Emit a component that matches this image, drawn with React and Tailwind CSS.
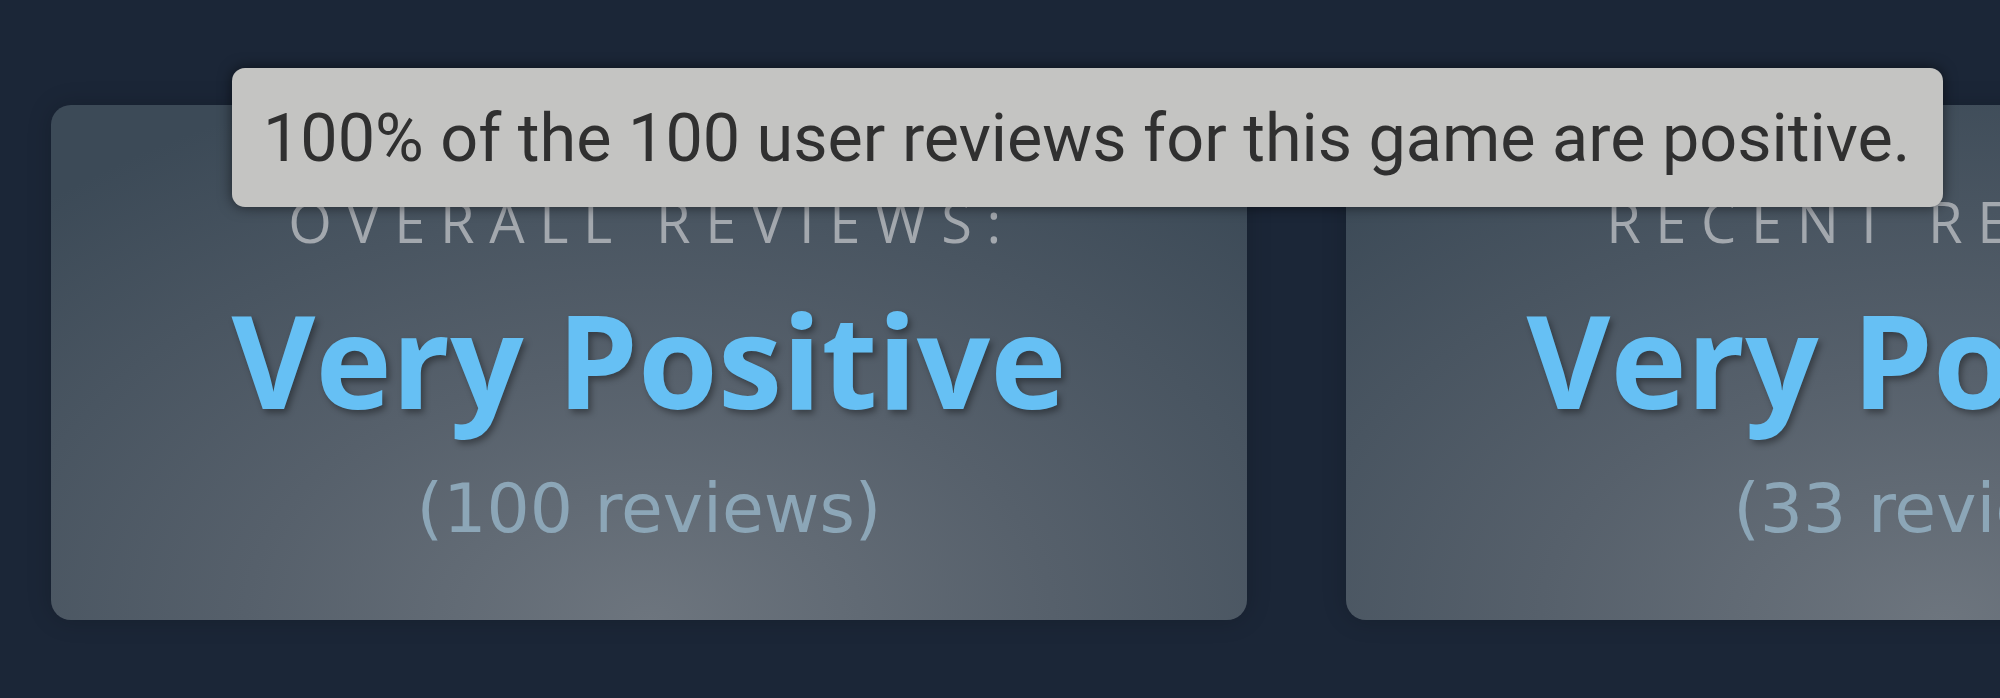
import React from 'react';

const reviews = [
  { label: 'Overall Reviews:', summary: 'Very Positive', count: '(100 reviews)' },
  { label: 'Recent Reviews:', summary: 'Very Positive', count: '(33 reviews)' },
];

const ReviewCard = ({ review }) => (
  <div className="w-[1196px] h-[515px] shrink-0 rounded-[20px] pt-[88px] flex flex-col items-center bg-[radial-gradient(ellipse_75%_110%_at_50%_100%,#6d757e_0%,#56606b_45%,#3c4a57_100%)] shadow-[0_0_24px_rgba(0,0,0,0.18)]">
    <div className="font-['Open_Sans',sans-serif] font-normal text-[56px] leading-none uppercase tracking-[14.6px] text-[#a3a8ae] whitespace-nowrap pl-[6px]">
      {review.label}
    </div>
    <div className="mt-[46px] font-['Open_Sans',sans-serif] font-bold text-[129px] leading-none text-[#66c0f4] whitespace-nowrap [text-shadow:3px_4px_6px_rgba(0,0,0,0.35)]">
      {review.summary}
    </div>
    <div className="mt-[51px] font-['DejaVu_Sans',sans-serif] text-[68px] leading-none text-[#8ca6b7] whitespace-nowrap">
      {review.count}
    </div>
  </div>
);

const App = () => {
  return (
    <div className="relative w-[2000px] h-[698px] overflow-hidden bg-[#1b2637]">
      <div className="flex gap-[99px] pl-[51px] pt-[105px]">
        {reviews.map((r) => (
          <ReviewCard key={r.label} review={r} />
        ))}
      </div>

      {/* hover tooltip */}
      <div className="absolute left-[232px] top-[68px] h-[139px] pl-[31px] pr-[33px] pt-[37px] rounded-[13px] bg-[#c4c4c2] shadow-[0_0_14px_rgba(0,0,0,0.55)]">
        <p className="font-['Roboto',sans-serif] text-[66.5px] leading-none text-[#303030] whitespace-nowrap">
          100% of the 100 user reviews for this game are positive.
        </p>
      </div>
    </div>
  );
};

export default App;
